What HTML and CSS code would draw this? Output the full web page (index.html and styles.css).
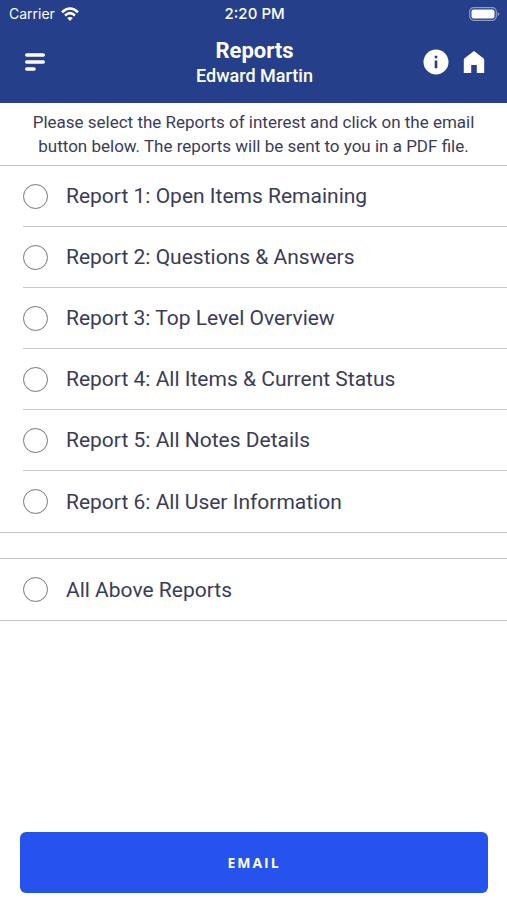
FILE: index.html
```html
<!DOCTYPE html>
<html lang="en">
<head>
<meta charset="utf-8">
<meta name="viewport" content="width=device-width, initial-scale=1">
<title>Reports</title>
<link rel="stylesheet" href="styles.css">
</head>
<body>
<header class="header">
  <div class="status">
    <div class="carrier">
      <span>Carrier</span>
      <svg width="18" height="14" viewBox="0 0 18 14" fill="none" stroke="#fff" stroke-width="2.6" aria-hidden="true">
        <path d="M1 5.2Q9-2.2 17 5.2"/>
        <path d="M4 8.4Q9 4 14 8.4"/>
        <path d="M9 14 6.2 11.1Q9 8.7 11.8 11.1Z" fill="#fff" stroke="none"/>
      </svg>
    </div>
    <time>2:20 PM</time>
    <svg class="battery" width="31" height="14" viewBox="0 0 31 14" aria-hidden="true">
      <rect x=".7" y=".7" width="26.6" height="12.6" rx="4" fill="none" stroke="#8e9dc8" stroke-width="1.2"/>
      <rect x="2.5" y="2.5" width="23" height="9" rx="2" fill="#fff"/>
      <path d="M28.7 5v4q1.6-.6 1.6-2t-1.6-2z" fill="#8e9dc8"/>
    </svg>
  </div>
  <div class="nav">
    <button class="icon-button" type="button" aria-label="Menu">
      <svg width="22" height="20" viewBox="0 0 22 20" stroke="#fff" stroke-width="3.6" stroke-linecap="round" aria-hidden="true">
        <path d="M2.8 3h16.4M2.8 10h16.4M2.8 17H10"/>
      </svg>
    </button>
    <div class="heading">
      <h1>Reports</h1>
      <p>Edward Martin</p>
    </div>
    <div class="actions">
      <button class="icon-button" type="button" aria-label="Information">
        <svg width="26" height="26" viewBox="0 0 26 26" aria-hidden="true">
          <circle cx="13" cy="13" r="12.5" fill="#fff"/>
          <path d="M11.7 6.7h2.6v2.6h-2.6zM11.7 11.5h2.6v7.7h-2.6z" fill="#263f8a"/>
        </svg>
      </button>
      <button class="icon-button" type="button" aria-label="Home">
        <svg width="22" height="26" viewBox="0 0 22 26" fill="#fff" aria-hidden="true">
          <path d="M11 2 20.4 9.2Q21.2 9.9 21.2 11V24H13.8V16H8.2V24H.8V11Q.8 9.9 1.6 9.2Z"/>
        </svg>
      </button>
    </div>
  </div>
</header>
<main class="main">
  <form class="form">
    <p class="intro">Please select the Reports of interest and click on the email button below. The reports will be sent to you in a PDF file.</p>
    <div class="group">
      <label class="row"><input type="radio" name="report"><span>Report 1: Open Items Remaining</span></label>
      <label class="row"><input type="radio" name="report"><span>Report 2: Questions &amp; Answers</span></label>
      <label class="row"><input type="radio" name="report"><span>Report 3: Top Level Overview</span></label>
      <label class="row"><input type="radio" name="report"><span>Report 4: All Items &amp; Current Status</span></label>
      <label class="row"><input type="radio" name="report"><span>Report 5: All Notes Details</span></label>
      <label class="row"><input type="radio" name="report"><span>Report 6: All User Information</span></label>
    </div>
    <div class="group group-all">
      <label class="row"><input type="radio" name="report"><span>All Above Reports</span></label>
    </div>
    <button class="email" type="button">EMAIL</button>
  </form>
</main>
</body>
</html>
```

FILE: styles.css
```css
* {
  box-sizing: border-box;
}

body {
  display: flex;
  flex-direction: column;
  min-height: 100vh;
  margin: 0;
  background: #fff;
  color: #3a3c57;
  font-family: Roboto, "Liberation Sans", sans-serif;
}

h1,
p {
  margin: 0;
}

.header {
  background: #263f8a;
  color: #fff;
  padding-bottom: 16px;
}

.status {
  display: grid;
  grid-template-columns: 1fr auto 1fr;
  align-items: center;
  height: 27px;
  padding: 0 7px 0 9px;
  font: 500 14px/27px Inter, "Liberation Sans", sans-serif;
  font-variant-numeric: tabular-nums;
}

.status time {
  font-size: 15px;
}

.carrier {
  display: flex;
  align-items: center;
  gap: 6px;
  font-weight: 400;
}

.battery {
  justify-self: end;
}

.nav {
  display: grid;
  grid-template-columns: 1fr auto 1fr;
  align-items: center;
  padding: 9px 22px 0 24px;
}

.icon-button {
  display: flex;
  padding: 0;
  border: 0;
  background: none;
}

.heading {
  padding-top: 2px;
  text-align: center;
}

.heading h1 {
  font-size: 22px;
  font-weight: 700;
  line-height: 26px;
}

.heading p {
  font-size: 18px;
  font-weight: 500;
  line-height: 23px;
}

.actions {
  display: flex;
  justify-content: flex-end;
  gap: 14px;
}

.main,
.form {
  display: flex;
  flex: 1;
  flex-direction: column;
}

.intro {
  padding: 7px 24px;
  border-bottom: 1px solid #c4c4c8;
  font-size: 17px;
  line-height: 24px;
  text-align: center;
}

.group {
  padding-left: 23px;
  border-bottom: 1px solid #c4c4c8;
}

.group-all {
  margin-top: 25px;
  border-top: 1px solid #c4c4c8;
}

.row {
  display: flex;
  align-items: center;
  gap: 18px;
  height: 61px;
  border-bottom: 1px solid #c8c8cc;
  font-size: 21px;
  line-height: 28px;
}

.row:last-child {
  border-bottom: 0;
}

.row input {
  appearance: none;
  width: 25px;
  height: 25px;
  margin: 0;
  border: 1px solid #74757f;
  border-radius: 50%;
}

.row input:checked {
  background: #2653ed;
  box-shadow: inset 0 0 0 5px #fff;
}

.email {
  height: 61px;
  margin: auto 19px 7px 20px;
  border: 0;
  border-radius: 6px;
  background: #2653ed;
  color: #fff;
  font: 700 14px/20px "Open Sans", "Liberation Sans", sans-serif;
  letter-spacing: 2px;
}
```
